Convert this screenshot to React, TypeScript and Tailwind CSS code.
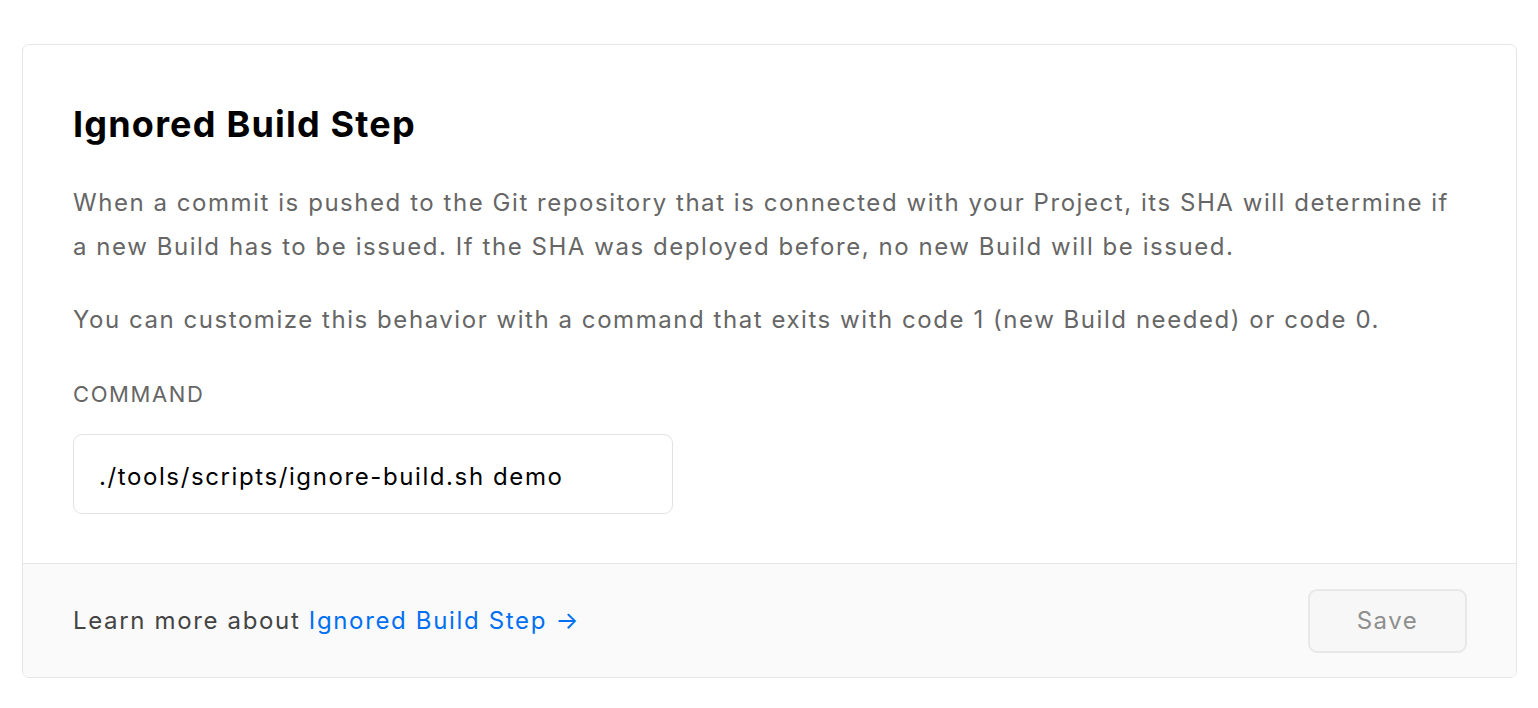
import React from "react";

export default function App() {
  return (
    <div className="min-h-screen bg-white pt-[44px] pl-[22px] pr-[21px]" style={{ fontFamily: "Inter, 'Noto Sans', sans-serif" }}>
      <div className="w-[1495px] rounded-[7px] border border-[#e6e6e6] bg-white overflow-hidden">
        <div className="px-[50px] pt-[57px] pb-[49px]">
          <h1 className="text-[36px] leading-[44px] font-bold text-black tracking-[1.2px]">Ignored Build Step</h1>
          <p className="mt-[35px] text-[24px] leading-[44px] text-[#666666] tracking-[1.55px]">
            When a commit is pushed to the Git repository that is connected with your Project, its SHA will determine if a new Build has to be issued. If the SHA was deployed before, no new Build will be issued.
          </p>
          <p className="mt-[29px] text-[24px] leading-[44px] text-[#666666] tracking-[1.55px]">
            You can customize this behavior with a command that exits with code 1 (new Build needed) or code 0.
          </p>
          <div className="mt-[36px] text-[22px] leading-[32px] text-[#666666] uppercase tracking-[1.6px]">Command</div>
          <div className="mt-[24px] flex h-[80px] w-[600px] items-center rounded-[9px] border border-[#e3e3e3] bg-white px-[25px] pt-[5px] text-[24px] text-black tracking-[1.6px]">
            ./tools/scripts/ignore-build.sh demo
          </div>
        </div>
        <div className="flex h-[114px] items-center justify-between border-t border-[#e6e6e6] bg-[#fafafa] pl-[50px] pr-[49px]">
          <div className="text-[24px] text-[#444444] tracking-[1.65px]">
            Learn more about <span className="text-[#0070f3]">Ignored Build Step →</span>
          </div>
          <button className="h-[64px] w-[159px] rounded-[9px] border-2 border-[#e8e8e8] bg-[#f7f7f7] text-[24px] text-[#8f8f8f] tracking-[1.5px]">
            Save
          </button>
        </div>
      </div>
    </div>
  );
}
